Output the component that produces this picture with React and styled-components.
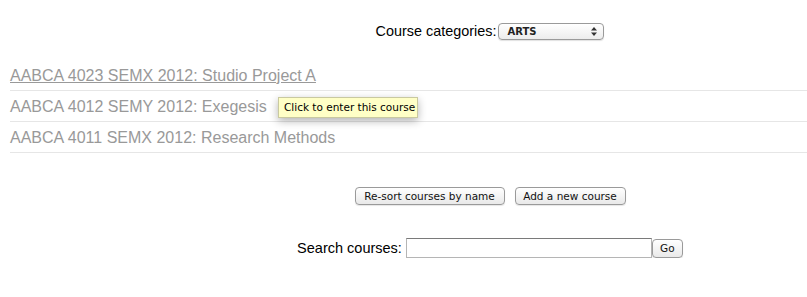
import React from 'react'
import styled, { createGlobalStyle } from 'styled-components';

const GlobalStyle = createGlobalStyle`
    html, body {
        margin: 0;
        padding: 0;
        background: #fff;
        overflow: hidden;
    }
    body {
        font-family: "Liberation Sans", Arial, sans-serif;
    }
`;

const courses = [
    { name: 'AABCA 4023 SEMX 2012: Studio Project A', hover: true },
    { name: 'AABCA 4012 SEMY 2012: Exegesis', tooltip: true },
    { name: 'AABCA 4011 SEMX 2012: Research Methods' },
];

function App() {
    return (
        <PageStyled>
            <GlobalStyle />
            <div className="categories">
                <span>Course categories:</span>
                <FakeSelect>
                    <span>ARTS</span>
                    <svg width="6" height="9" viewBox="0 0 6 9">
                        <path d="M3 0 L6 3.5 L0 3.5 Z" fill="#333" />
                        <path d="M3 9 L6 5.5 L0 5.5 Z" fill="#333" />
                    </svg>
                </FakeSelect>
            </div>

            <ul className="course-list">
                {courses.map((c) => (
                    <CourseRow key={c.name} $hover={c.hover}>
                        <a href="#">{c.name}</a>
                        {c.tooltip && <Tooltip>Click to enter this course</Tooltip>}
                    </CourseRow>
                ))}
            </ul>

            <div className="actions">
                <Button $w={150}>Re-sort courses by name</Button>
                <Button $w={111}>Add a new course</Button>
            </div>

            <form className="search" onSubmit={(e) => e.preventDefault()}>
                <label htmlFor="search">Search courses:</label>
                <SearchInput id="search" type="text" />
                <Button $w={31} $h={19}>Go</Button>
            </form>
        </PageStyled>
    )
}

const PageStyled = styled.div`
    box-sizing: border-box;
    width: calc(100% - 10px);
    margin-left: 10px;
    padding-top: 22px;

    .categories, .actions, .search{
        display: flex;
        align-items: center;
        justify-content: center;
        padding-left: 163px;
    }

    .categories{
        gap: 2px;
        height: 18px;
        font-size: 14.4px;
        color: #000;
    }

    .course-list{
        list-style: none;
        margin: 0;
        padding: 0;
        margin-top: 20px;
    }

    .actions{
        gap: 10px;
        margin-top: 34px;
    }

    .search{
        margin: 33px 0 0 0;
        font-size: 14.5px;
        color: #000;
        label{
            margin-right: 4px;
        }
    }
`;

const FakeSelect = styled.div`
    box-sizing: border-box;
    width: 106px;
    height: 17px;
    display: flex;
    align-items: center;
    justify-content: space-between;
    padding: 0 6px 0 8px;
    border: 1px solid #9a9a9a;
    border-radius: 4px;
    background: linear-gradient(#ffffff, #ececec);
    box-shadow: 0 1px 1px rgba(0,0,0,0.12);
    font-family: "DejaVu Sans", sans-serif;
    font-size: 10px;
    font-weight: bold;
    color: #222;
`;

const CourseRow = styled.li`
    position: relative;
    height: 30px;
    line-height: 31px;
    border-bottom: 1px solid #e6e6e6;
    font-size: 16px;

    a{
        color: #999;
        text-decoration: ${(p) => (p.$hover ? 'underline' : 'none')};
    }
`;

const Tooltip = styled.div`
    position: absolute;
    left: 268px;
    top: 6px;
    box-sizing: border-box;
    width: 140px;
    height: 21px;
    line-height: 19px;
    padding: 0 5px;
    background: #ffffc6;
    border: 1px solid #c9c9a0;
    box-shadow: 0 3px 8px rgba(0,0,0,0.3);
    font-family: "DejaVu Sans", sans-serif;
    font-size: 10.5px;
    color: #000;
    white-space: nowrap;
`;

const Button = styled.button`
    box-sizing: border-box;
    width: ${(p) => p.$w}px;
    height: ${(p) => p.$h || 18}px;
    padding: 0;
    border: 1px solid #9a9a9a;
    border-radius: 4px;
    background: linear-gradient(#ffffff, #e9e9e9);
    box-shadow: 0 1px 1px rgba(0,0,0,0.1);
    font-family: "DejaVu Sans", sans-serif;
    font-size: 10.5px;
    color: #111;
    cursor: pointer;
`;

const SearchInput = styled.input`
    box-sizing: border-box;
    width: 246px;
    height: 20px;
    margin: 0;
    border: 1px solid #b5b5b5;
    border-top-color: #7a7a7a;
    background: #fff;
    outline: none;
`;

export default App;
